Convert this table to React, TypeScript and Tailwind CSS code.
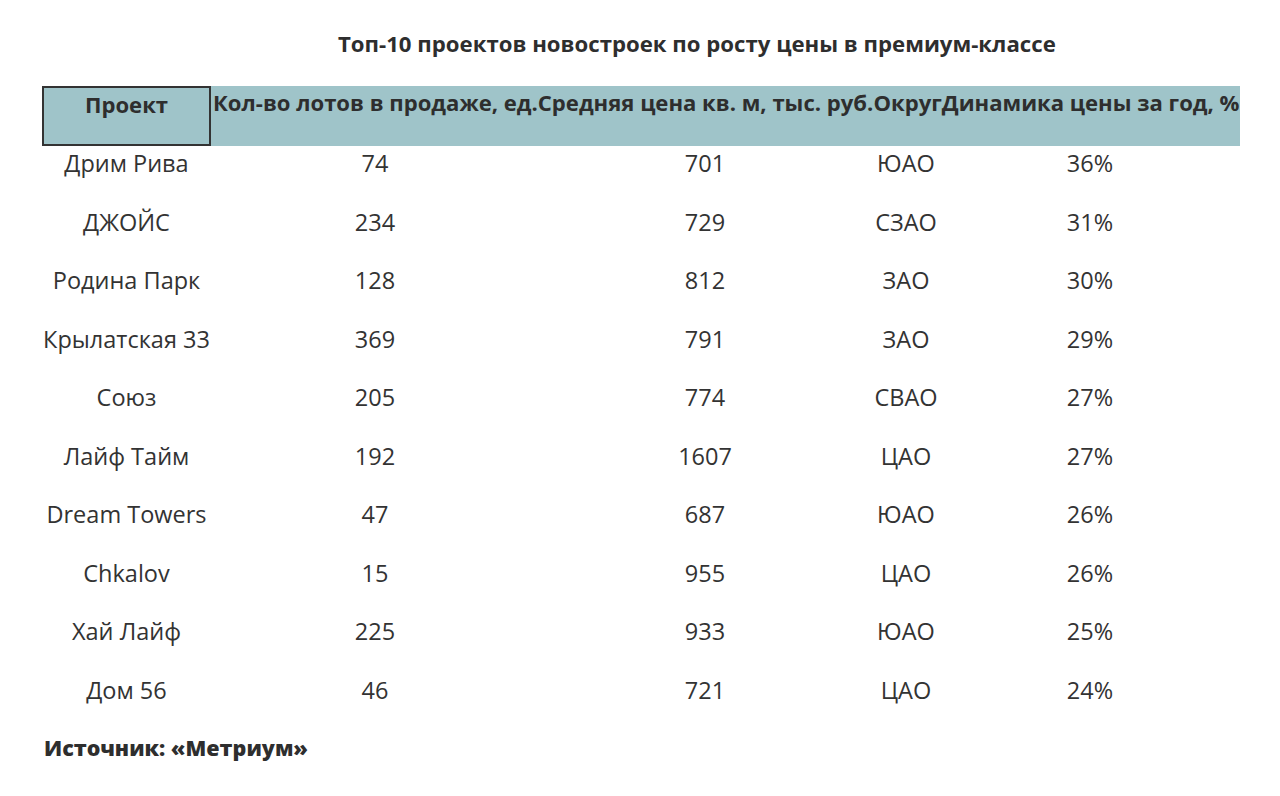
const rows: [string, string, string, string, string][] = [
   ["Дрим Рива", "74", "701", "ЮАО", "36%"],
   ["ДЖОЙС", "234", "729", "СЗАО", "31%"],
   ["Родина Парк", "128", "812", "ЗАО", "30%"],
   ["Крылатская 33", "369", "791", "ЗАО", "29%"],
   ["Союз", "205", "774", "СВАО", "27%"],
   ["Лайф Тайм", "192", "1607", "ЦАО", "27%"],
   ["Dream Towers", "47", "687", "ЮАО", "26%"],
   ["Chkalov", "15", "955", "ЦАО", "26%"],
   ["Хай Лайф", "225", "933", "ЮАО", "25%"],
   ["Дом 56", "46", "721", "ЦАО", "24%"],
];

export default function App() {
   return (
      <div className="w-[1280px] h-[796px] bg-white text-[#333] font-['Open_Sans',sans-serif] overflow-hidden">
         <h1 className="pt-[29px] pl-[338px] text-[22.2px] leading-[30px] font-bold text-[#2e2e2e] whitespace-nowrap">
            Топ-10 проектов новостроек по росту цены в премиум-классе
         </h1>

         <div className="ml-[42px] mt-[27px] w-[1198px]">
            <div className="flex h-[60px] bg-[#9fc4c9] font-bold text-[22.1px] leading-[33px] text-[#2e2e2e] whitespace-nowrap">
               <div className="w-[169px] shrink-0 border-2 border-[#333] text-center">Проект</div>
               <div className="pl-[2px]">Кол-во лотов в продаже, ед.Средняя цена кв. м, тыс. руб.ОкругДинамика цены за год, %</div>
            </div>

            {rows.map((row) => (
               <div
                  key={row[0]}
                  className="grid grid-cols-[169px_328px_332px_70px_298px] h-[58.5px] text-[23.5px] leading-[34px] text-center whitespace-nowrap"
               >
                  {row.map((cell, i) => (
                     <div key={i} className="flex justify-center">
                        {cell}
                     </div>
                  ))}
               </div>
            ))}
         </div>

         <p className="pl-[44px] text-[21.5px] leading-[34px] font-extrabold text-[#2e2e2e]">Источник: «Метриум»</p>
      </div>
   );
}
